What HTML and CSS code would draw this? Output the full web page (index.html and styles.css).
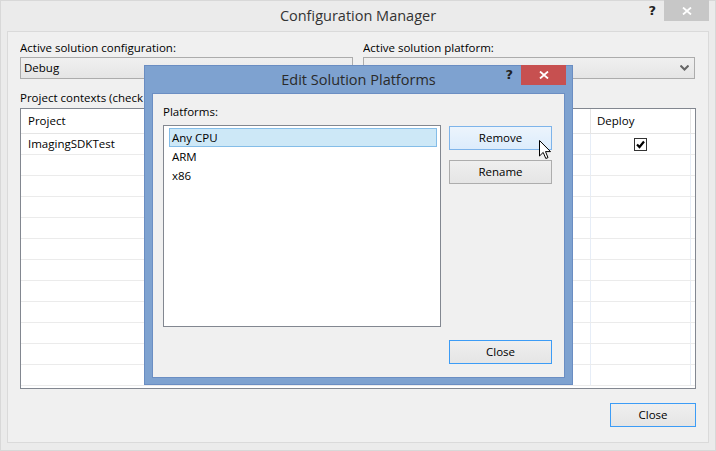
FILE: index.html
```html
<!DOCTYPE html>
<html>
<head>
<meta charset="utf-8">
<title>Configuration Manager</title>
<link rel="stylesheet" href="styles.css">
</head>
<body>
<div class="window">
  <div class="titlebar">
    <span></span>
    <span class="title">Configuration Manager</span>
    <div class="caption">
      <span class="help">?</span>
      <span class="cap-close">
        <svg width="10" height="8" viewBox="0 0 10 8"><path d="M1 0.5 L9 7.5 M9 0.5 L1 7.5" stroke="#fff" stroke-width="1.8"/></svg>
      </span>
    </div>
  </div>
  <div class="client">
    <div class="top-fields">
      <div class="field">
        <div class="label">Active solution configuration:</div>
        <div class="combo">Debug</div>
      </div>
      <div class="field">
        <div class="label">Active solution platform:</div>
        <div class="combo combo-end">
          <span></span>
          <svg width="9" height="6" viewBox="0 0 9 6"><path d="M0.5 0.5 L4.5 4.5 L8.5 0.5" stroke="#666" stroke-width="2" fill="none"/></svg>
        </div>
      </div>
    </div>
    <div class="label contexts">Project contexts (check the project configurations to build or deploy):</div>
    <div class="grid">
      <div class="row head">
        <div class="cell">Project</div>
        <div class="cell"></div>
        <div class="cell"></div>
        <div class="cell"></div>
        <div class="cell">Deploy</div>
        <div class="cell filler"></div>
      </div>
      <div class="row">
        <div class="cell">ImagingSDKTest</div>
        <div class="cell"></div>
        <div class="cell"></div>
        <div class="cell"></div>
        <div class="cell center"><span class="check"><svg width="11" height="11" viewBox="0 0 11 11"><path d="M2 5.5 L4.5 8 L9 2.5" stroke="#000" stroke-width="2.2" fill="none"/></svg></span></div>
        <div class="cell filler"></div>
      </div>
      <div class="row"><div class="cell"></div><div class="cell"></div><div class="cell"></div><div class="cell"></div><div class="cell"></div><div class="cell filler"></div></div>
      <div class="row"><div class="cell"></div><div class="cell"></div><div class="cell"></div><div class="cell"></div><div class="cell"></div><div class="cell filler"></div></div>
      <div class="row"><div class="cell"></div><div class="cell"></div><div class="cell"></div><div class="cell"></div><div class="cell"></div><div class="cell filler"></div></div>
      <div class="row"><div class="cell"></div><div class="cell"></div><div class="cell"></div><div class="cell"></div><div class="cell"></div><div class="cell filler"></div></div>
      <div class="row"><div class="cell"></div><div class="cell"></div><div class="cell"></div><div class="cell"></div><div class="cell"></div><div class="cell filler"></div></div>
      <div class="row"><div class="cell"></div><div class="cell"></div><div class="cell"></div><div class="cell"></div><div class="cell"></div><div class="cell filler"></div></div>
      <div class="row"><div class="cell"></div><div class="cell"></div><div class="cell"></div><div class="cell"></div><div class="cell"></div><div class="cell filler"></div></div>
      <div class="row"><div class="cell"></div><div class="cell"></div><div class="cell"></div><div class="cell"></div><div class="cell"></div><div class="cell filler"></div></div>
      <div class="row"><div class="cell"></div><div class="cell"></div><div class="cell"></div><div class="cell"></div><div class="cell"></div><div class="cell filler"></div></div>
      <div class="row"><div class="cell"></div><div class="cell"></div><div class="cell"></div><div class="cell"></div><div class="cell"></div><div class="cell filler"></div></div>
      <div class="row"><div class="cell"></div><div class="cell"></div><div class="cell"></div><div class="cell"></div><div class="cell"></div><div class="cell filler"></div></div>
    </div>
    <div class="footer">
      <button class="btn default main-close">Close</button>
    </div>
  </div>

  <div class="dialog">
    <div class="dlg-titlebar">
      <span></span>
      <span class="dlg-title">Edit Solution Platforms</span>
      <div class="caption">
        <span class="help">?</span>
        <span class="dlg-close">
          <svg width="10" height="8" viewBox="0 0 10 8"><path d="M1 0.5 L9 7.5 M9 0.5 L1 7.5" stroke="#fff" stroke-width="1.8"/></svg>
        </span>
      </div>
    </div>
    <div class="dlg-content">
      <div class="dlg-left">
        <div class="label">Platforms:</div>
        <div class="listbox">
          <div class="item selected">Any CPU</div>
          <div class="item">ARM</div>
          <div class="item">x86</div>
        </div>
      </div>
      <div class="dlg-right">
        <button class="btn hover remove">Remove</button>
        <button class="btn rename">Rename</button>
        <button class="btn default dlg-closebtn">Close</button>
      </div>
    </div>
  </div>

  <svg class="cursor" width="13" height="20" viewBox="0 0 13 20">
    <path d="M0.5 0.5 L0.5 16 L4.2 12.4 L6.8 18.5 L9 17.6 L6.5 11.6 L11.5 11.6 Z" fill="#fff" stroke="#000" stroke-width="1" stroke-linejoin="miter"/>
  </svg>
</div>
</body>
</html>
```

FILE: styles.css
```css
html, body {
  margin: 0;
  padding: 0;
}
body {
  width: 716px;
  height: 451px;
  overflow: hidden;
  font-family: "Open Sans", "Noto Sans", "DejaVu Sans", sans-serif;
  font-size: 11.5px;
  color: #000;
  background: #ebebeb;
}

.window {
  position: relative;
  width: 716px;
  height: 451px;
  box-sizing: border-box;
  border: 1px solid #d8d8d8;
  background: #ebebeb;
  display: flex;
  flex-direction: column;
}

.titlebar {
  height: 30px;
  display: grid;
  grid-template-columns: 1fr auto 1fr;
  align-items: start;
}
.title {
  line-height: 30px;
  font-size: 14.5px;
  color: #333;
}
.caption {
  display: flex;
  justify-content: flex-end;
  align-items: flex-start;
  margin-right: 6px;
  margin-top: -1px;
}
.help {
  font-weight: bold;
  font-size: 13px;
  line-height: 22px;
  color: #222;
  margin-right: 8px;
  font-family: "DejaVu Sans", sans-serif;
}
.cap-close {
  width: 45px;
  height: 21px;
  background: #c7c7c7;
  display: flex;
  align-items: center;
  justify-content: center;
}

.client {
  margin: 0 6px;
  height: 412px;
  box-sizing: border-box;
  border: 1px solid #dadada;
  background: #f0f0f0;
  padding: 8px 12px 0 12px;
  display: flex;
  flex-direction: column;
}

.label {
  line-height: 15px;
  height: 15px;
  white-space: nowrap;
  overflow: hidden;
}

.top-fields {
  display: grid;
  grid-template-columns: 333px 332px;
  gap: 10px;
}
.field .label {
  margin-bottom: 2px;
}
.combo {
  height: 22px;
  box-sizing: border-box;
  border: 1px solid #acacac;
  background: linear-gradient(#f0f0f0, #e5e5e5);
  padding: 0 0 0 3px;
  line-height: 20px;
  display: flex;
  align-items: center;
}
.combo-end {
  justify-content: space-between;
  padding-right: 5px;
}

.contexts {
  margin-top: 11px;
  margin-bottom: 3px;
}

.grid {
  height: 281px;
  box-sizing: border-box;
  border: 1px solid #828790;
  background: #fff;
  overflow: hidden;
}
.row {
  display: grid;
  grid-template-columns: 170px 140px 140px 120px 100px 1fr;
  height: 21px;
  box-sizing: border-box;
  border-bottom: 1px solid #ebebeb;
}
.row.head {
  height: 25px;
  border-bottom-color: #e5e5e5;
}
.cell {
  border-right: 1px solid #e6edf7;
  padding-left: 7px;
  line-height: 20px;
  white-space: nowrap;
  overflow: hidden;
  display: flex;
  align-items: center;
}
.row.head .cell {
  line-height: 24px;
  border-right-color: #e5e5e5;
  padding-left: 6px;
}
.row.head .cell:first-child {
  padding-left: 7px;
}
.cell.center {
  justify-content: center;
  padding-left: 0;
}
.cell.filler {
  border-right: none;
  padding: 0;
}
.check {
  width: 13px;
  height: 13px;
  box-sizing: border-box;
  border: 1px solid #333;
  background: #fff;
  display: flex;
  align-items: center;
  justify-content: center;
}

.footer {
  margin-top: 14px;
  display: flex;
  justify-content: flex-end;
}

.btn {
  width: 103px;
  height: 24px;
  box-sizing: border-box;
  border: 1px solid #adadad;
  background: linear-gradient(#efefef, #e5e5e5);
  font-family: inherit;
  font-size: 11.5px;
  color: #000;
  padding: 0;
  margin: 0;
  line-height: 20px;
}
.btn.default {
  border-color: #3c9cf6;
}
.btn.hover {
  border-color: #7eb4ea;
  background: linear-gradient(#ecf4fc, #dcecfc);
}
.main-close {
  width: 86px;
}

/* dialog overlay */
.dialog {
  position: absolute;
  left: 143px;
  top: 64px;
  width: 429px;
  height: 320px;
  box-sizing: border-box;
  border: 1px solid #6a8dc2;
  background: #7ea2d0;
  display: flex;
  flex-direction: column;
}
.dlg-titlebar {
  height: 27px;
  display: grid;
  grid-template-columns: 1fr auto 1fr;
  align-items: start;
}
.dlg-title {
  line-height: 27px;
  font-size: 14.5px;
  color: #2a2a2a;
}
.dlg-titlebar .caption {
  margin-top: -1px;
  margin-right: 6px;
}
.dlg-titlebar .help {
  line-height: 20px;
}
.dlg-close {
  width: 45px;
  height: 20px;
  background: #c75050;
  display: flex;
  align-items: center;
  justify-content: center;
}
.dlg-content {
  margin: 0 7px;
  height: 285px;
  box-sizing: border-box;
  border: 1px solid #6b8ec3;
  background: #f0f0f0;
  padding: 10px 12px 13px 10px;
  display: flex;
  gap: 8px;
}
.dlg-left {
  width: 278px;
  display: flex;
  flex-direction: column;
}
.dlg-left .label {
  margin-bottom: 6px;
}
.listbox {
  height: 202px;
  box-sizing: border-box;
  border: 1px solid #828790;
  background: #fff;
  padding: 2px 3px 2px 5px;
}
.item {
  height: 19px;
  box-sizing: border-box;
  line-height: 17px;
  padding-left: 2px;
  border: 1px solid transparent;
}
.item.selected {
  background: #cde8f7;
  border-color: #84bde8;
}
.dlg-right {
  display: flex;
  flex-direction: column;
}
.remove {
  margin-top: 22px;
}
.rename {
  margin-top: 10px;
}
.dlg-closebtn {
  margin-top: auto;
}

.cursor {
  position: absolute;
  left: 538px;
  top: 139px;
}
```
